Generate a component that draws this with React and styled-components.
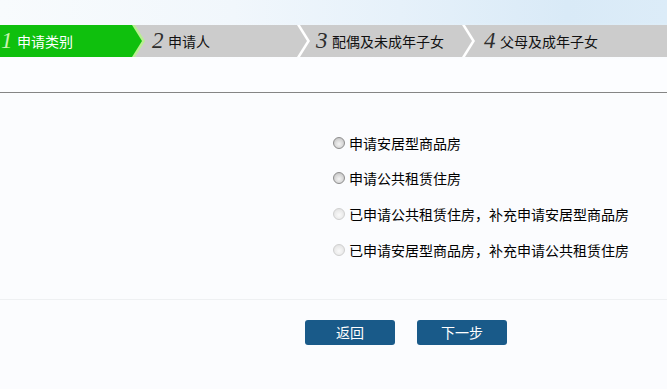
import React, { useState } from 'react'
import styled, { createGlobalStyle } from 'styled-components'

const GlobalStyle = createGlobalStyle`
  html, body {
    margin: 0;
    padding: 0;
    background: #fbfcfe;
    font-family: "Noto Sans CJK SC", "Noto Sans", sans-serif;
  }
`;

const steps = [
    { num: '1', label: '申请类别', width: 132, pad: 1 },
    { num: '2', label: '申请人', width: 165, pad: 20 },
    { num: '3', label: '配偶及未成年子女', width: 165, pad: 19 },
    { num: '4', label: '父母及成年子女', width: null, pad: 22 },
];

const options = [
    { text: '申请安居型商品房', enabled: true },
    { text: '申请公共租赁住房', enabled: true },
    { text: '已申请公共租赁住房，补充申请安居型商品房', enabled: false },
    { text: '已申请安居型商品房，补充申请公共租赁住房', enabled: false },
];

function App() {
    const [picked, setPicked] = useState(null);

    return (
        <Page>
            <GlobalStyle />
            <Sky>
                <StepBar>
                    {steps.map((s, i) => (
                        <Step
                            key={s.num}
                            $active={i === 0}
                            $width={s.width}
                            $pad={s.pad}
                            $last={i === steps.length - 1}
                        >
                            <StepNum $active={i === 0}>{s.num}</StepNum>
                            <StepLabel $active={i === 0}>{s.label}</StepLabel>
                        </Step>
                    ))}
                </StepBar>
            </Sky>
            <Divider />
            <Choices>
                {options.map((o, i) => (
                    <Choice key={o.text} onClick={() => o.enabled && setPicked(i)}>
                        <Radio $enabled={o.enabled} $checked={picked === i} />
                        <span>{o.text}</span>
                    </Choice>
                ))}
            </Choices>
            <Actions>
                <Button>返回</Button>
                <Button>下一步</Button>
            </Actions>
        </Page>
    )
}

const Page = styled.div`
    width: 667px;
    min-height: 389px;
    background: #fbfcfe;
`;

const Sky = styled.div`
    padding-top: 25px;
    padding-bottom: 36px;
    background:
        linear-gradient(180deg, rgba(255,255,255,0) 0px, rgba(255,255,255,0) 22px, #fcfdff 60px),
        linear-gradient(90deg, #f8fbfd 0%, #f1f7fc 35%, #e6f1fa 60%, #d9eaf7 85%, #dcecf8 100%);
`;

const StepBar = styled.div`
    display: flex;
    height: 32px;
    background: #cccccc;
`;

const Step = styled.div`
    position: relative;
    display: flex;
    align-items: center;
    box-sizing: border-box;
    padding-left: ${p => p.$pad}px;
    width: ${p => (p.$width ? `${p.$width}px` : 'auto')};
    flex: ${p => (p.$width ? 'none' : '1')};
    background: ${p => (p.$active ? '#0fc00d' : '#cccccc')};

    &::before {
        content: '';
        display: ${p => (p.$last ? 'none' : 'block')};
        position: absolute;
        top: 0;
        left: 100%;
        width: 13px;
        height: 100%;
        background: ${p => (p.$active ? '#b9ee92' : '#ffffff')};
        clip-path: polygon(0 0, 3px 0, 13px 50%, 3px 100%, 0 100%);
        z-index: 1;
    }

    &::after {
        content: '';
        display: ${p => (p.$last ? 'none' : 'block')};
        position: absolute;
        top: 0;
        left: 100%;
        width: 10px;
        height: 100%;
        background: ${p => (p.$active ? '#0fc00d' : '#cccccc')};
        clip-path: polygon(0 0, 10px 50%, 0 100%);
        z-index: 2;
    }
`;

const StepNum = styled.span`
    font-family: "Liberation Serif", "DejaVu Serif", serif;
    font-style: italic;
    font-size: 23px;
    line-height: 32px;
    width: 13px;
    margin-right: 3px;
    color: ${p => (p.$active ? '#c9f3b3' : '#2e2e2e')};
`;

const StepLabel = styled.span`
    font-size: 14px;
    line-height: 32px;
    color: ${p => (p.$active ? '#ffffff' : '#111111')};
`;

const Divider = styled.div`
    height: 1px;
    background: #858585;
    margin-top: -1px;
`;

const Choices = styled.div`
    display: grid;
    grid-auto-rows: 35.6px;
    padding: 32px 0 32px 333px;
    border-bottom: 1px solid #eef0f2;
`;

const Choice = styled.label`
    display: flex;
    align-items: center;
    gap: 4px;
    font-size: 14px;
    color: #000;
    cursor: pointer;
`;

const Radio = styled.span`
    box-sizing: border-box;
    width: 12px;
    height: 12px;
    border-radius: 50%;
    border: 1px solid ${p => (p.$enabled ? '#8d8d8d' : '#cfcfcf')};
    background: ${p => p.$checked
        ? 'radial-gradient(circle, #333 0 2px, #fff 2.5px)'
        : p.$enabled
            ? 'radial-gradient(circle at 50% 60%, #f4f4f4 0, #dcdcdc 45%, #b9b9b9 100%)'
            : 'radial-gradient(circle at 50% 60%, #fafafa 0, #ececec 50%, #dedede 100%)'};
`;

const Actions = styled.div`
    display: flex;
    gap: 22px;
    padding: 20px 0 0 305px;
`;

const Button = styled.button`
    width: 90px;
    height: 25px;
    border: none;
    border-radius: 3px;
    background: #195a89;
    color: #fff;
    font-family: "Noto Sans CJK SC", sans-serif;
    font-size: 14px;
    line-height: 25px;
    padding: 0;
    cursor: pointer;
`;

export default App
